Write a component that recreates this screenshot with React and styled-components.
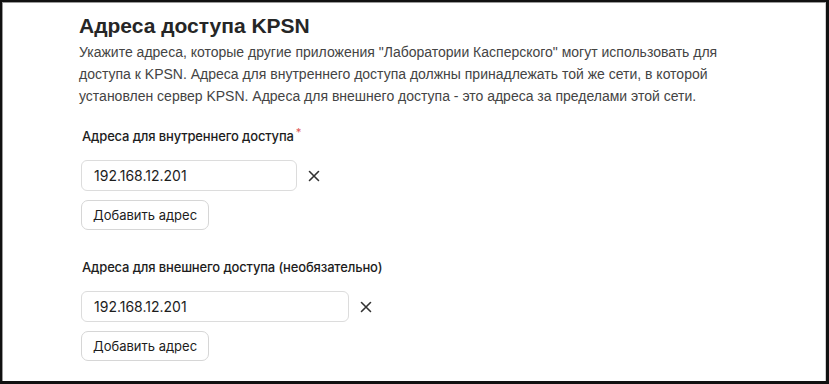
import React, { useState } from "react";
import styled, { createGlobalStyle } from "styled-components";

const Global = createGlobalStyle`
  html, body {
    margin: 0;
    padding: 0;
    background: #ffffff;
  }
  * {
    box-sizing: border-box;
  }
`;

const Frame = styled.div`
  width: 829px;
  height: 384px;
  border: 2px solid #111;
  border-right-width: 3px;
  border-bottom-width: 3px;
  background: #fff;
  overflow: hidden;
`;

const Inner = styled.div`
  height: 100%;
  border-left: 1px solid #9a9a9a;
  border-top: 1px solid #9a9a9a;
  border-right: 1px solid #d0d0d0;
  padding: 9px 0 0 76px;
`;

const Title = styled.h1`
  margin: 0;
  font-family: "Liberation Sans", Arial, sans-serif;
  font-weight: 700;
  font-size: 21px;
  line-height: 28px;
  color: #262626;
`;

const Intro = styled.p`
  margin: 1px 0 0;
  width: 650px;
  font-family: "Liberation Sans", Arial, sans-serif;
  font-size: 14px;
  line-height: 22px;
  color: #444;
`;

const Section = styled.div`
  margin-top: ${(p) => p.$top}px;
  display: flex;
  flex-direction: column;
  align-items: flex-start;
`;

const Label = styled.div`
  font-family: Inter, "Noto Sans", sans-serif;
  font-weight: 500;
  font-size: 13px;
  letter-spacing: -0.15px;
  line-height: 18px;
  color: #1d1d1d;
  margin-left: 3px;
  margin-bottom: 15px;

  sup {
    color: #e05a5a;
    font-size: 11px;
    margin-left: 2px;
    vertical-align: 5px;
    line-height: 0;
  }
`;

const Row = styled.div`
  display: flex;
  align-items: center;
  gap: 8px;
  margin-left: 2px;
`;

const Field = styled.input`
  width: ${(p) => p.$w}px;
  height: 31px;
  border: 1px solid #dcdcdc;
  border-radius: 6px;
  padding: 0 12px;
  font-family: Inter, "Noto Sans", sans-serif;
  font-size: 14px;
  color: #1d1d1d;
  outline: none;
  background: #fff;
`;

const Remove = styled.button`
  width: 18px;
  height: 18px;
  padding: 0;
  border: none;
  background: none;
  display: flex;
  align-items: center;
  justify-content: center;
  cursor: pointer;
`;

const AddButton = styled.button`
  margin-top: 9px;
  margin-left: 2px;
  height: 30px;
  padding: 0 11px;
  border: 1px solid #d6d6d6;
  border-radius: 7px;
  background: #fff;
  font-family: Inter, "Noto Sans", sans-serif;
  font-size: 13px;
  color: #1d1d1d;
  cursor: pointer;
`;

const Cross = () => (
  <svg width="12" height="12" viewBox="0 0 12 12">
    <path d="M1.5 1.5 L10.5 10.5 M10.5 1.5 L1.5 10.5" stroke="#333" strokeWidth="1.6" strokeLinecap="round" />
  </svg>
);

const AddressGroup = ({ label, required, width, top }) => {
  const [value, setValue] = useState("192.168.12.201");
  return (
    <Section $top={top}>
      <Label>
        {label}
        {required && <sup>*</sup>}
      </Label>
      <Row>
        <Field $w={width} value={value} onChange={(e) => setValue(e.target.value)} />
        <Remove aria-label="Удалить">
          <Cross />
        </Remove>
      </Row>
      <AddButton>Добавить адрес</AddButton>
    </Section>
  );
};

export default function App() {
  return (
    <>
      <Global />
      <Frame>
        <Inner>
          <Title>Адреса доступа KPSN</Title>
          <Intro>
            Укажите адреса, которые другие приложения "Лаборатории Касперского" могут использовать для
            доступа к KPSN. Адреса для внутреннего доступа должны принадлежать той же сети, в которой
            установлен сервер KPSN. Адреса для внешнего доступа - это адреса за пределами этой сети.
          </Intro>
          <AddressGroup label="Адреса для внутреннего доступа" required width={216} top={20} />
          <AddressGroup label="Адреса для внешнего доступа (необязательно)" width={268} top={28} />
        </Inner>
      </Frame>
    </>
  );
}
